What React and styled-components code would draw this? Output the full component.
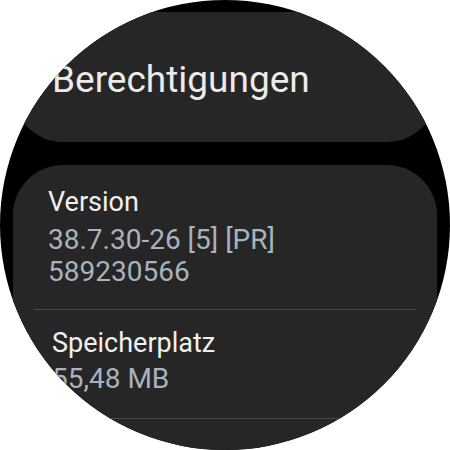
import React from "react";
import styled, { createGlobalStyle } from "styled-components";

const Global = createGlobalStyle`
  html, body { margin: 0; padding: 0; background: #ffffff; }
  body { font-family: Roboto, "Noto Sans", sans-serif; }
`;

const Screen = styled.div`
  width: 450px;
  height: 450px;
  border-radius: 50%;
  overflow: hidden;
  background: #000000;
  display: flex;
  flex-direction: column;
  gap: 23px;
  padding: 12px 13px 0;
  box-sizing: border-box;
`;

const Card = styled.div`
  background: #262626;
  border-radius: 50px;
  flex-shrink: 0;
  display: flex;
  flex-direction: column;
`;

const HeaderCard = styled(Card)`
  height: 130px;
  padding: 46px 0 0 39px;
  box-sizing: border-box;
`;

const HeaderText = styled.div`
  font-size: 37px;
  line-height: 44px;
  color: #ebebeb;
`;

const InfoCard = styled(Card)`
  padding: 0 21px 0 21px;
  min-height: 400px;
`;

const Row = styled.div`
  padding: ${(p) => p.$top}px 0 ${(p) => p.$bottom}px ${(p) => p.$indent}px;
  border-bottom: 1px solid #4a4a4a;
`;

const Title = styled.div`
  font-size: 27px;
  line-height: 32px;
  color: #f0f0f0;
`;

const Value = styled.div`
  font-size: 28px;
  line-height: 32px;
  color: #a9b3bd;
  margin-top: ${(p) => p.$gap}px;
`;

export default function App() {
  return (
    <>
      <Global />
      <Screen>
        <HeaderCard>
          <HeaderText>Berechtigungen</HeaderText>
        </HeaderCard>
        <InfoCard>
          <Row $top={21} $bottom={21} $indent={14}>
            <Title>Version</Title>
            <Value $gap={6}>38.7.30-26 [5] [PR]</Value>
            <Value $gap={0}>589230566</Value>
          </Row>
          <Row $top={17} $bottom={23} $indent={18}>
            <Title>Speicherplatz</Title>
            <Value $gap={4}>55,48 MB</Value>
          </Row>
        </InfoCard>
      </Screen>
    </>
  );
}
